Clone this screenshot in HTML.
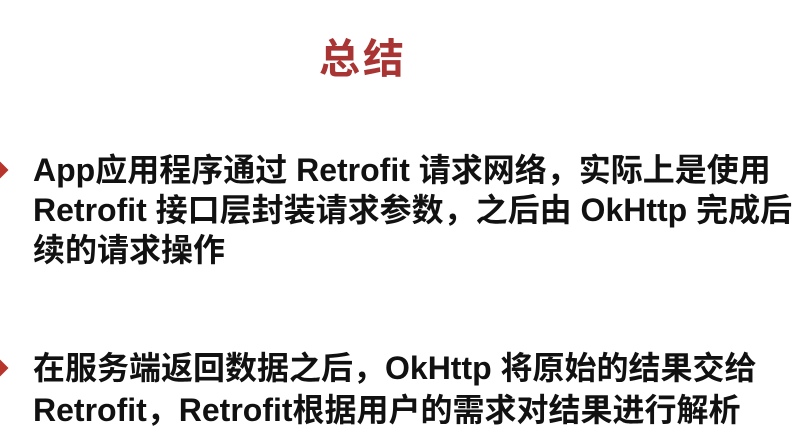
<!DOCTYPE html>
<html><head><meta charset="utf-8"><style>
body{margin:0;width:810px;height:439px;background:#fff;overflow:hidden;position:relative;font-family:"Liberation Sans","Noto Sans CJK SC",sans-serif;}
.t{position:absolute;left:319px;top:25px;font-size:41px;font-weight:bold;color:#a83434;letter-spacing:3px}
.l{position:absolute;left:33px;font-size:32px;font-weight:bold;color:#111;white-space:nowrap;line-height:40px}
.d{position:absolute;width:12px;height:12px;background:#b8352b;transform:rotate(45deg)}
</style></head><body>
<div class="t">总结</div>
<div class="d" style="left:-6px;top:164px"></div>
<div class="l" style="top:150px">App应用程序通过 Retrofit 请求网络，实际上是使用</div>
<div class="l" style="top:190px">Retrofit 接口层封装请求参数，之后由 OkHttp 完成后</div>
<div class="l" style="top:230px">续的请求操作</div>
<div class="d" style="left:-6px;top:362px"></div>
<div class="l" style="top:348px">在服务端返回数据之后，OkHttp 将原始的结果交给</div>
<div class="l" style="top:390px">Retrofit，Retrofit根据用户的需求对结果进行解析</div>
</body></html>
